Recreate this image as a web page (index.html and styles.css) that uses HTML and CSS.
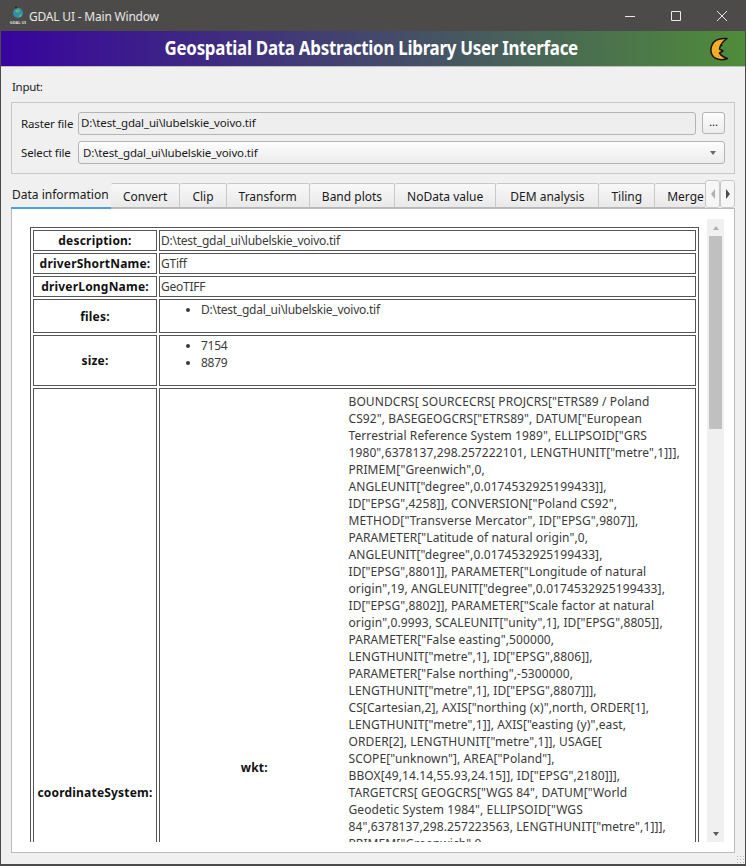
FILE: index.html
```html
<!DOCTYPE html>
<html lang="en">
    <head>
        <meta charset="UTF-8">
        <title>GDAL UI - Main Window</title>
        <link rel="stylesheet" href="styles.css">
    </head>
    <body>
        <div class="window">
            <!-- title bar -->
            <div class="titlebar">
                <svg class="app-icon" width="20" height="20" viewBox="0 0 20 20">
                    <circle cx="10" cy="7" r="5" fill="#2e8fb0"/>
                    <path d="M7 4l3-1 2 2-2 2-2-1zM11 9l3-1-1 3-2 0z" fill="#5fb36a"/>
                    <circle cx="8" cy="1.5" r="1" fill="#222"/>
                    <text x="10" y="17.500" class="app-icon-text">GDAL UI</text>
                </svg>
                <span class="titlebar-text">GDAL UI - Main Window</span>
                <div class="controls">
                    <svg width="10" height="10" viewBox="0 0 10 10"><path d="M0 5.500h10" stroke="#e8e8e8" fill="none"/></svg>
                    <svg width="10" height="10" viewBox="0 0 10 10"><path d="M.5.500h9v9h-9z" stroke="#e8e8e8" fill="none"/></svg>
                    <svg width="10" height="10" viewBox="0 0 10 10"><path d="M0 0l10 10M10 0L0 10" stroke="#e8e8e8" fill="none"/></svg>
                </div>
            </div>
            <!-- banner -->
            <div class="banner">
                <span></span>
                <h1 class="banner-title">Geospatial Data Abstraction Library User Interface</h1>
                <svg class="moon" width="20" height="24" viewBox="0 0 20 24">
                    <path d="M17 1.500C11 1 4 2.500 2 8 0 13 1 18 5 21 9 23 14 23 17.500 21.500 14 20.500 11 18.500 9.500 16L13 14 9.500 12C10 8 12 5 17 1.500Z" fill="#f4ae2c" stroke="#1a1408" stroke-width="1.500" stroke-linejoin="round"/>
                    <path d="M10.500 8l2 .8" stroke="#1a1408" stroke-width="1.200" fill="none"/>
                    <path d="M5 8l1 1M4.500 15l1 1M8 19l1 .5" stroke="#d98a16" fill="none"/>
                </svg>
            </div>

            <div class="content">
                <div class="input-label">Input:</div>
                <div class="group">
                    <div class="file-row">
                        <label class="file-label">Raster file</label>
                        <div class="file-line">
                            <div class="line-edit">D:\test_gdal_ui\lubelskie_voivo.tif</div>
                            <div class="browse">...</div>
                        </div>
                    </div>
                    <div class="file-row">
                        <label class="file-label">Select file</label>
                        <div class="combo">
                            <span class="combo-text">D:\test_gdal_ui\lubelskie_voivo.tif</span>
                            <i class="arrow-down"></i>
                        </div>
                    </div>
                </div>

                <!-- tabs -->
                <div class="tabs">
                    <a class="tab tab-active">Data information</a>
                    <a class="tab">Convert</a>
                    <a class="tab">Clip</a>
                    <a class="tab">Transform</a>
                    <a class="tab">Band plots</a>
                    <a class="tab">NoData value</a>
                    <a class="tab tab-wide">DEM analysis</a>
                    <a class="tab">Tiling</a>
                    <a class="tab">Merge</a>
                    <div class="tab-scroll">
                        <span class="tab-btn"><i class="arrow-left"></i></span>
                        <span class="tab-btn"><i class="arrow-right"></i></span>
                    </div>
                </div>

                <div class="pane">
                    <div class="view">
                        <table class="info">
                            <tr>
                                <th class="key">description:</th>
                                <td>D:\test_gdal_ui\lubelskie_voivo.tif</td>
                            </tr>
                            <tr>
                                <th>driverShortName:</th>
                                <td>GTiff</td>
                            </tr>
                            <tr>
                                <th>driverLongName:</th>
                                <td>GeoTIFF</td>
                            </tr>
                            <tr>
                                <th>files:</th>
                                <td><ul><li>D:\test_gdal_ui\lubelskie_voivo.tif</li></ul></td>
                            </tr>
                            <tr>
                                <th>size:</th>
                                <td><ul><li>7154</li><li>8879</li></ul></td>
                            </tr>
                            <tr>
                                <th>coordinateSystem:</th>
                                <td>
                                    <table class="nested">
                                        <tr>
                                            <th class="nested-key">wkt:</th>
                                            <td>BOUNDCRS[ SOURCECRS[ PROJCRS["ETRS89 / Poland<br>
                                                CS92", BASEGEOGCRS["ETRS89", DATUM["European<br>
                                                Terrestrial Reference System 1989", ELLIPSOID["GRS<br>
                                                1980",6378137,298.257222101, LENGTHUNIT["metre",1]]],<br>
                                                PRIMEM["Greenwich",0,<br>
                                                ANGLEUNIT["degree",0.0174532925199433]],<br>
                                                ID["EPSG",4258]], CONVERSION["Poland CS92",<br>
                                                METHOD["Transverse Mercator", ID["EPSG",9807]],<br>
                                                PARAMETER["Latitude of natural origin",0,<br>
                                                ANGLEUNIT["degree",0.0174532925199433],<br>
                                                ID["EPSG",8801]], PARAMETER["Longitude of natural<br>
                                                origin",19, ANGLEUNIT["degree",0.0174532925199433],<br>
                                                ID["EPSG",8802]], PARAMETER["Scale factor at natural<br>
                                                origin",0.9993, SCALEUNIT["unity",1], ID["EPSG",8805]],<br>
                                                PARAMETER["False easting",500000,<br>
                                                LENGTHUNIT["metre",1], ID["EPSG",8806]],<br>
                                                PARAMETER["False northing",-5300000,<br>
                                                LENGTHUNIT["metre",1], ID["EPSG",8807]]],<br>
                                                CS[Cartesian,2], AXIS["northing (x)",north, ORDER[1],<br>
                                                LENGTHUNIT["metre",1]], AXIS["easting (y)",east,<br>
                                                ORDER[2], LENGTHUNIT["metre",1]], USAGE[<br>
                                                SCOPE["unknown"], AREA["Poland"],<br>
                                                BBOX[49,14.14,55.93,24.15]], ID["EPSG",2180]]],<br>
                                                TARGETCRS[ GEOGCRS["WGS 84", DATUM["World<br>
                                                Geodetic System 1984", ELLIPSOID["WGS<br>
                                                84",6378137,298.257223563, LENGTHUNIT["metre",1]]],<br>
                                                PRIMEM["Greenwich",0,<br>
                                                ANGLEUNIT["degree",0.0174532925199433]],<br>
                                                CS[ellipsoidal,2], AXIS["latitude",north, ORDER[1],<br>
                                                ANGLEUNIT["degree",0.0174532925199433]],<br>
                                                AXIS["longitude",east, ORDER[2],<br>
                                                ANGLEUNIT["degree",0.0174532925199433]],<br>
                                                ID["EPSG",4326]]], ABRIDGEDTRANSFORMATION[<br>
                                                "Transformation from unknown to WGS84",<br>
                                                METHOD["Position Vector transformation (geog2D<br>
                                                domain)", ID["EPSG",9606]],<br>
                                                PARAMETER["X-axis translation",0, ID["EPSG",8605]],<br>
                                                PARAMETER["Y-axis translation",0, ID["EPSG",8606]],<br>
                                                PARAMETER["Z-axis translation",0, ID["EPSG",8607]],<br>
                                                PARAMETER["X-axis rotation",0, ID["EPSG",8608]],<br>
                                                PARAMETER["Y-axis rotation",0, ID["EPSG",8609]],<br>
                                                PARAMETER["Z-axis rotation",0, ID["EPSG",8610]],<br>
                                                PARAMETER["Scale difference",1, ID["EPSG",8611]]]]<br>
                                                ]
                                            </td>
                                        </tr>
                                        <tr>
                                            <th>dataAxisToSRSAxisMapping:</th>
                                            <td><ul><li>1</li><li>2</li></ul></td>
                                        </tr>
                                    </table>
                                </td>
                            </tr>
                        </table>
                    </div>
                    <div class="scrollbar">
                        <div class="scroll-btn"><i class="arrow-up"></i></div>
                        <div class="scroll-track"><div class="scroll-thumb"></div></div>
                        <div class="scroll-btn"><i class="arrow-down"></i></div>
                    </div>
                </div>
            </div>
            <div class="grip"></div>
        </div>
    </body>
</html>
```

FILE: styles.css
```css
*{
    margin: 0;
    padding: 0;
    box-sizing: border-box;
}
body{
    width: 746px;
    height: 866px;
    overflow: hidden;
    font-family: "Noto Sans", "Open Sans", sans-serif;
    font-size: 12px;
    letter-spacing: -0.25px;
    line-height: 17px;
    color: #1a1a1a;
}
.window{
    width: 746px;
    height: 866px;
    border: 1px solid #4c4b49;
    border-bottom-width: 2px;
    background-color: #f0f0f0;
    display: flex;
    flex-direction: column;
    position: relative;
}

/* title bar */
.titlebar{
    height: 30px;
    flex: none;
    background-color: #4c4b49;
    color: #e6e6e6;
    display: flex;
    align-items: center;
    padding-left: 7px;
}
.app-icon{
    margin-right: 1px;
}
.app-icon-text{
    font-size: 4px;
    font-weight: bold;
    fill: #ddd;
    text-anchor: middle;
    letter-spacing: 0;
}
.titlebar-text{
    flex: 1;
    letter-spacing: -0.2px;
}
.controls{
    display: flex;
    gap: 36px;
    padding-right: 18px;
}

/* banner */
.banner{
    height: 36px;
    flex: none;
    background: linear-gradient(to right, #38049e, #4f8c3a);
    border-bottom: 1px solid #bdbdbd;
    display: grid;
    grid-template-columns: 1fr auto 1fr;
    align-items: center;
}
.banner-title{
    font-size: 19px;
    font-weight: bold;
    color: #fff;
    letter-spacing: -0.3px;
    margin-right: 4px;
    white-space: nowrap;
    transform: scaleX(0.89);
}
.moon{
    justify-self: end;
    margin-right: 15px;
}

/* input group */
.content{
    flex: 1;
    min-height: 0;
    padding: 0 10px 11px;
    display: flex;
    flex-direction: column;
}
.input-label{
    height: 35px;
    flex: none;
    padding: 11px 0 0 1px;
    font-size: 11.500px;
    letter-spacing: -0.3px;
}
.group{
    height: 72px;
    flex: none;
    border: 1px solid #c8c8c8;
    padding: 9px 9px 0;
    display: flex;
    flex-direction: column;
    gap: 6px;
    font-size: 11.500px;
    letter-spacing: -0.15px;
}
.file-row{
    display: flex;
    height: 23px;
    align-items: center;
}
.file-label{
    width: 57px;
    flex: none;
    margin-bottom: 1px;
}
.file-line{
    flex: 1;
    display: flex;
    gap: 6px;
}
.line-edit{
    flex: 1;
    height: 23px;
    background-color: #eeeeee;
    border: 1px solid #b4b4b4;
    border-radius: 3px;
    padding: 1px 2px;
}
.browse{
    width: 23px;
    height: 22px;
    background: linear-gradient(#fdfdfd, #ececec);
    border: 1px solid #b4b4b4;
    border-radius: 3px;
    text-align: center;
}
.combo{
    flex: 1;
    height: 23px;
    background: linear-gradient(#fdfdfd, #ececec);
    border: 1px solid #b4b4b4;
    border-radius: 3px;
    padding: 2px 4px;
    display: flex;
    justify-content: space-between;
    align-items: center;
}
.combo-text{
    margin-bottom: 1px;
}
.combo .arrow-down{
    margin-right: 4px;
    border-width: 4px 3.500px 0;
    border-top-color: #6a6a6a;
}

/* arrows */
.arrow-down, .arrow-up, .arrow-left, .arrow-right{
    display: block;
    width: 0;
    height: 0;
    border-style: solid;
    border-color: transparent;
}
.arrow-down{
    border-width: 4px 3.500px 0;
    border-top-color: #5a5a5a;
}
.arrow-up{
    border-width: 0 3.500px 4px;
    border-bottom-color: #b0b0b0;
}
.arrow-left{
    border-width: 5px 4px 5px 0;
    border-right-color: #b0b0b0;
}
.arrow-right{
    border-width: 5px 0 5px 4px;
    border-left-color: #4a4a4a;
}

/* tabs */
.tabs{
    height: 26px;
    flex: none;
    margin-top: 9px;
    margin-bottom: -1px;
    display: flex;
    position: relative;
    z-index: 1;
    letter-spacing: 0;
}
.tab{
    height: 25px;
    padding: 4px 12px 0;
    background: linear-gradient(#f8f8f8, #e9e9e9);
    border: 1px solid #c8c8c8;
    border-left: none;
    border-bottom-color: #b8b8b8;
    border-radius: 2px 2px 0 0;
    white-space: nowrap;
    flex: none;
}
.tab-wide{
    padding: 4px 14px 0;
}
.tab-active{
    height: 26px;
    width: 100px;
    padding: 3px 0 0 1px;
    background: none;
    border: none;
    border-bottom: 2px solid #4c9fe0;
    border-radius: 0;
}
.tab-scroll{
    position: absolute;
    top: -3px;
    right: 0;
    height: 28px;
    width: 30px;
    display: flex;
    background-color: #f0f0f0;
}
.tab-btn{
    flex: 1;
    background-color: #f6f6f6;
    border: 1px solid #c8c8c8;
    border-radius: 3px;
    display: flex;
    align-items: center;
    justify-content: center;
}

/* tab page */
.pane{
    flex: 1;
    min-height: 0;
    background-color: #fff;
    border: 1px solid #bcbcbc;
    padding: 10px 10px 10px 18px;
    display: flex;
}
.view{
    flex: 1;
    min-width: 0;
    overflow: hidden;
    padding-top: 8px;
}
.scrollbar{
    width: 17px;
    flex: none;
    background-color: #f0f0f0;
    display: flex;
    flex-direction: column;
}
.scroll-btn{
    height: 17px;
    flex: none;
    display: flex;
    align-items: center;
    justify-content: center;
}
.scroll-track{
    flex: 1;
    padding: 0 2px;
}
.scroll-thumb{
    height: 193px;
    background-color: #c0c0c0;
}

/* data table */
table{
    border-collapse: separate;
    border-spacing: 2px;
}
.info{
    width: 669px;
    table-layout: fixed;
    border: 1px solid #555;
}
.info th, .info td{
    border: 1px solid #555;
    padding: 1px;
    text-align: left;
}
.info th{
    text-align: center;
    color: #111;
    vertical-align: middle;
    letter-spacing: 0.2px;
}
.info .key{
    width: 124px;
}
.info td{
    color: #3a3a3a;
    vertical-align: top;
}
ul{
    padding-left: 40px;
    margin-bottom: 13px;
}
.info .nested{
    border: none;
    width: 100%;
    table-layout: fixed;
}
.info .nested th, .info .nested td{
    border: none;
    white-space: nowrap;
}
.info .nested td{
    letter-spacing: 0.1px;
}
.info .nested .nested-key{
    width: 182.500px;
}
.grip{
    position: absolute;
    right: 1px;
    bottom: 1px;
    width: 8px;
    height: 8px;
    background-image: radial-gradient(#b5b5b5 1px, transparent 1px);
    background-size: 3px 3px;
}
```
